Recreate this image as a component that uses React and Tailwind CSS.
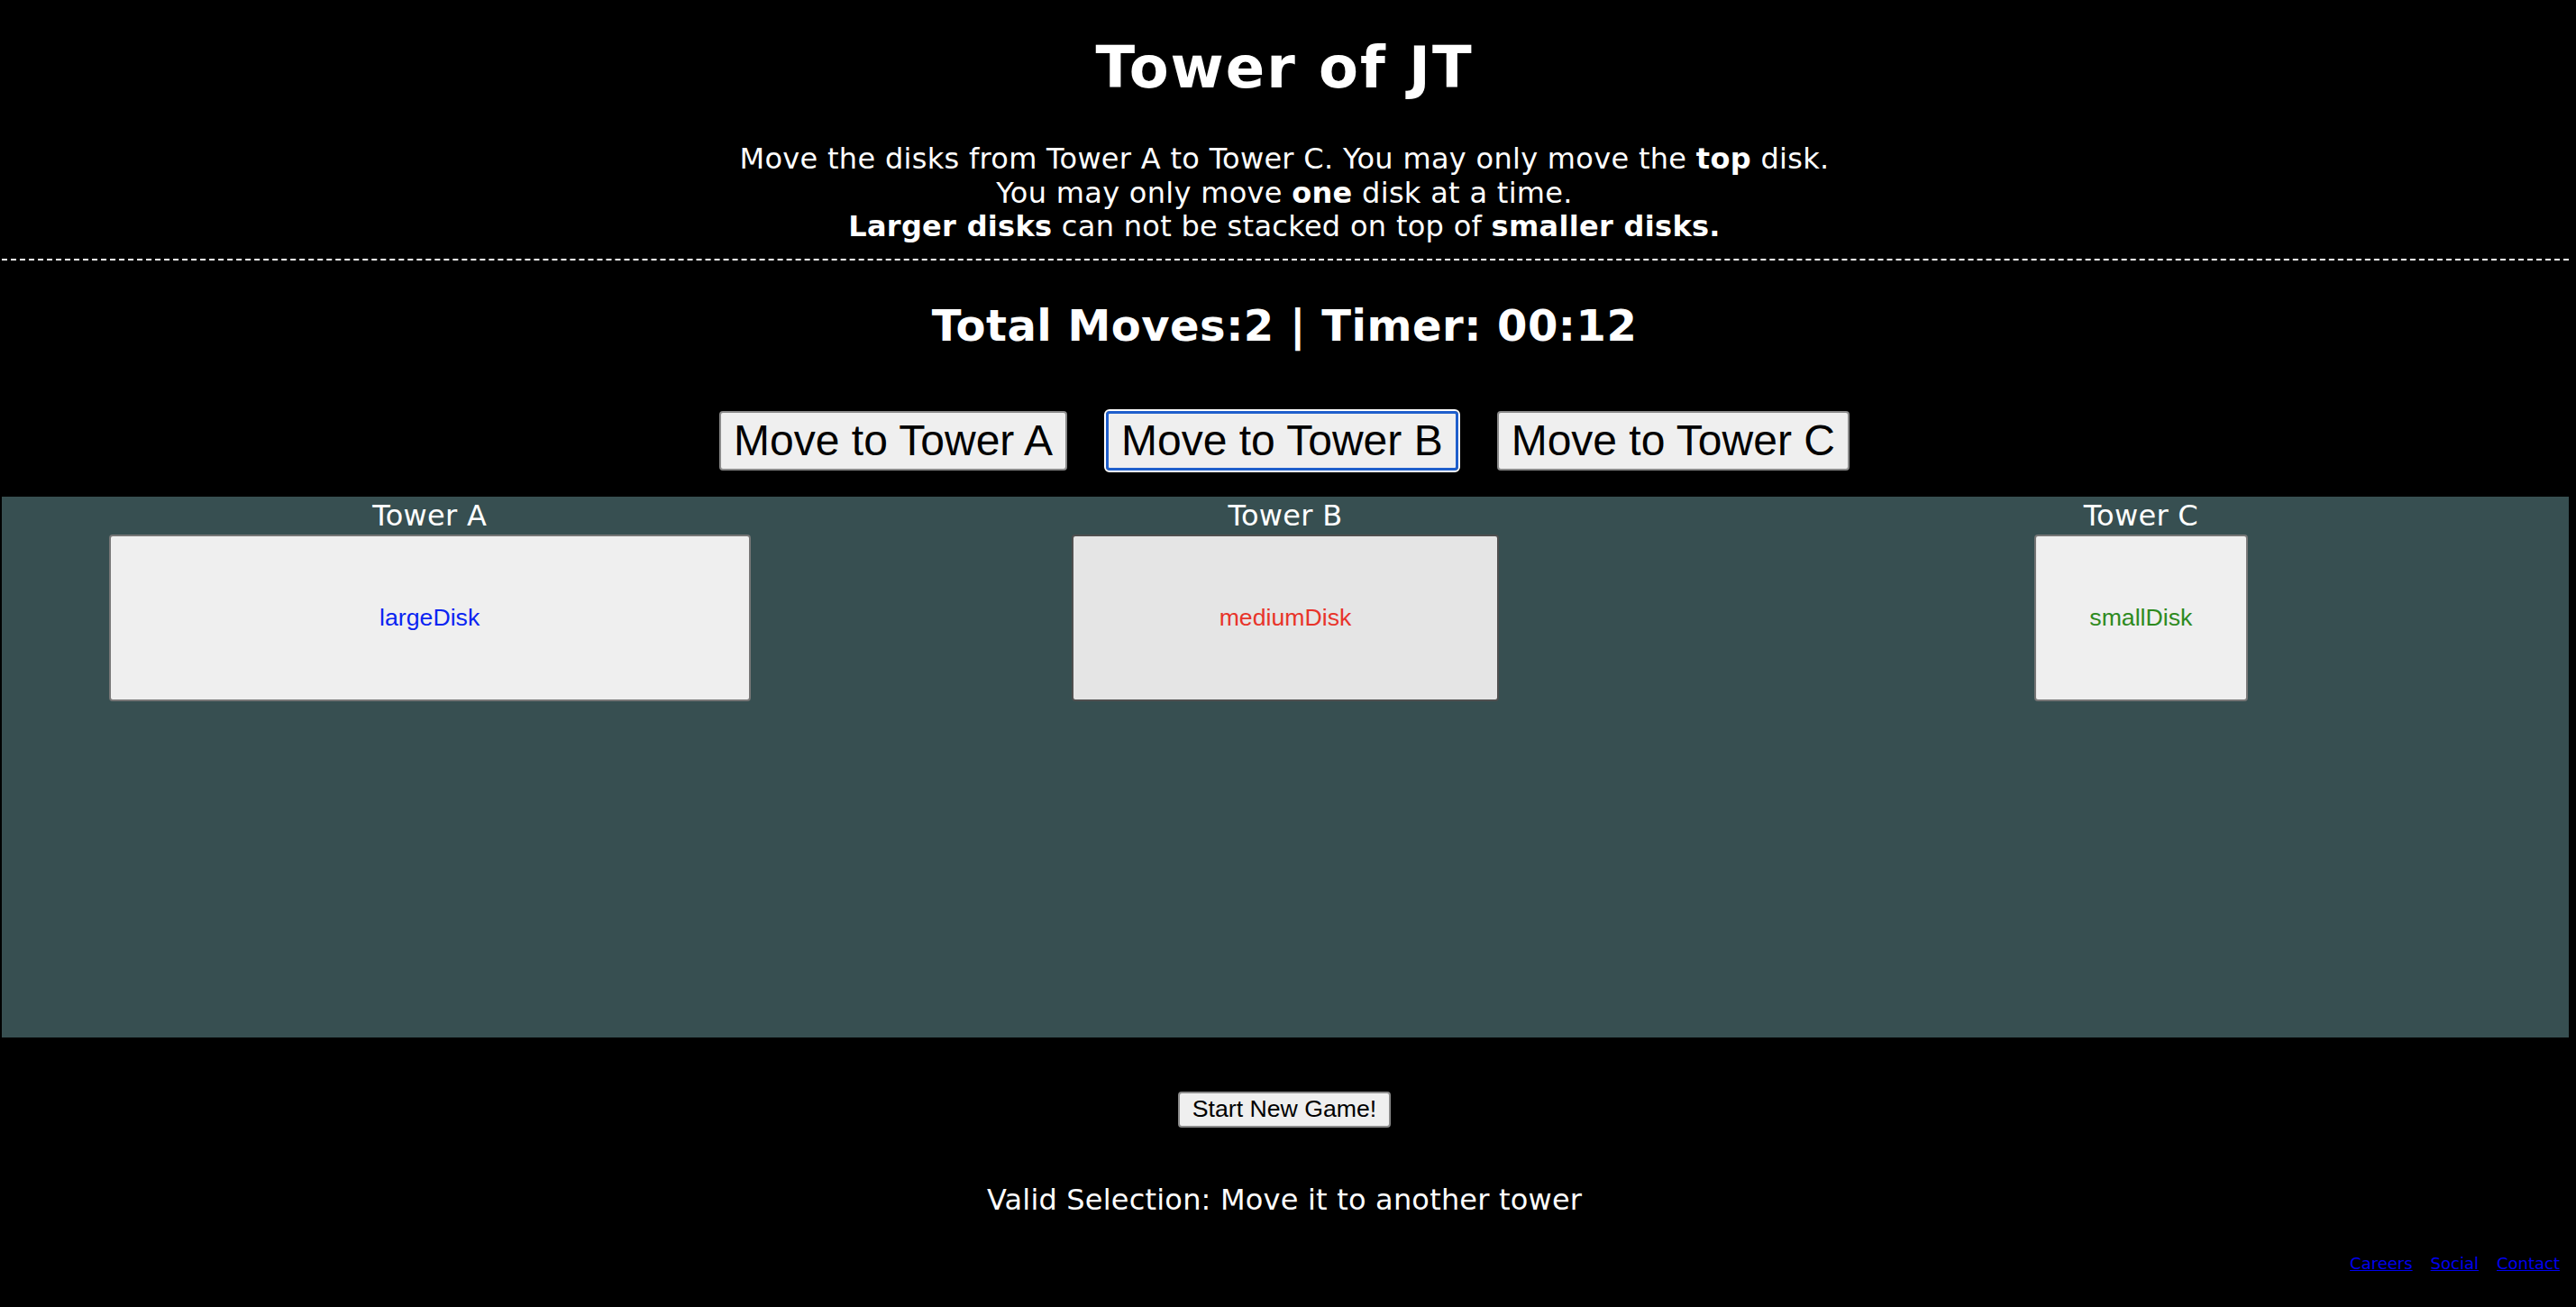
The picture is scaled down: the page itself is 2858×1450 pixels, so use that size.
import React from 'react';

const towers = [
  { name: 'Tower A', disk: 'largeDisk', width: 'w-3/4', color: 'text-[#0a24f2]', bg: 'bg-[#efefef]', border: 'border-[#767676]' },
  { name: 'Tower B', disk: 'mediumDisk', width: 'w-1/2', color: 'text-[#e8342a]', bg: 'bg-[#e5e5e5]', border: 'border-[#4f4f4f]' },
  { name: 'Tower C', disk: 'smallDisk', width: 'w-1/4', color: 'text-[#2e8a1e]', bg: 'bg-[#efefef]', border: 'border-[#767676]' },
];

const Tower = ({ tower }) => (
  <div className="flex flex-col items-center">
    <div className="pt-[3px] text-[32px] leading-[37px] tracking-[0.3px]">{tower.name}</div>
    <button
      className={`mt-[2px] h-[185px] ${tower.width} ${tower.bg} ${tower.border} border-2 rounded-[4px] text-[26.67px] ${tower.color} font-['Liberation_Sans',Arial,sans-serif]`}
    >
      {tower.disk}
    </button>
  </div>
);

const MoveButton = ({ label, focused }) => (
  <button
    className={`h-[66px] px-[14px] rounded-[4px] bg-[#efefef] text-black text-[48px] leading-[55px] font-['Liberation_Sans',Arial,sans-serif] ${
      focused
        ? 'border-[3px] border-[#1f5fcc] outline-2 outline-white'
        : 'border-2 border-[#8a8a8a]'
    }`}
  >
    {label}
  </button>
);

export default function App() {
  return (
    <div className="min-h-screen w-full bg-black text-white font-['DejaVu_Sans',Verdana,sans-serif]">
      <div className="w-[2850px] flex flex-col">
        {/* header */}
        <h1 className="pt-[38px] text-center text-[64px] leading-[75px] font-bold tracking-[2px]">Tower of JT</h1>
        <p className="mt-[45px] text-center text-[32px] leading-[37.5px] tracking-[0.3px]">
          Move the disks from Tower A to Tower C. You may only move the <b>top</b> disk.
          <br />
          You may only move <b>one</b> disk at a time.
          <br />
          <b>Larger disks</b> can not be stacked on top of <b>smaller disks.</b>
        </p>
        <div className="mt-[16px] ml-[2px] border-t-2 border-dashed border-white" />

        {/* stats */}
        <h2 className="mt-[44px] text-center text-[48px] leading-[56px] font-bold tracking-[0.5px]">
          Total Moves:2 | Timer: 00:12
        </h2>

        {/* move buttons */}
        <div className="mt-[67px] flex justify-center gap-[43px]">
          <MoveButton label="Move to Tower A" />
          <MoveButton label="Move to Tower B" focused />
          <MoveButton label="Move to Tower C" />
        </div>

        {/* board */}
        <div className="mt-[29px] ml-[2px] h-[600px] bg-[#374f51] grid grid-cols-3 items-start">
          {towers.map(t => (
            <Tower key={t.name} tower={t} />
          ))}
        </div>

        <div className="mt-[60px] flex justify-center">
          <button className="h-[40px] px-[14px] rounded-[4px] border-2 border-[#8a8a8a] bg-[#efefef] text-black text-[26.67px] leading-[31px] font-['Liberation_Sans',Arial,sans-serif]">
            Start New Game!
          </button>
        </div>

        <p className="mt-[62px] text-center text-[32px] leading-[37px] tracking-[0.2px]">
          Valid Selection: Move it to another tower
        </p>

        {/* footer */}
        <div className="mt-[41px] flex justify-end gap-[20px] pr-[10px] text-[18px] leading-[21px]">
          <a href="#" className="text-[#0000ee] underline">Careers</a>
          <a href="#" className="text-[#0000ee] underline">Social</a>
          <a href="#" className="text-[#0000ee] underline">Contact</a>
        </div>
      </div>
    </div>
  );
}
